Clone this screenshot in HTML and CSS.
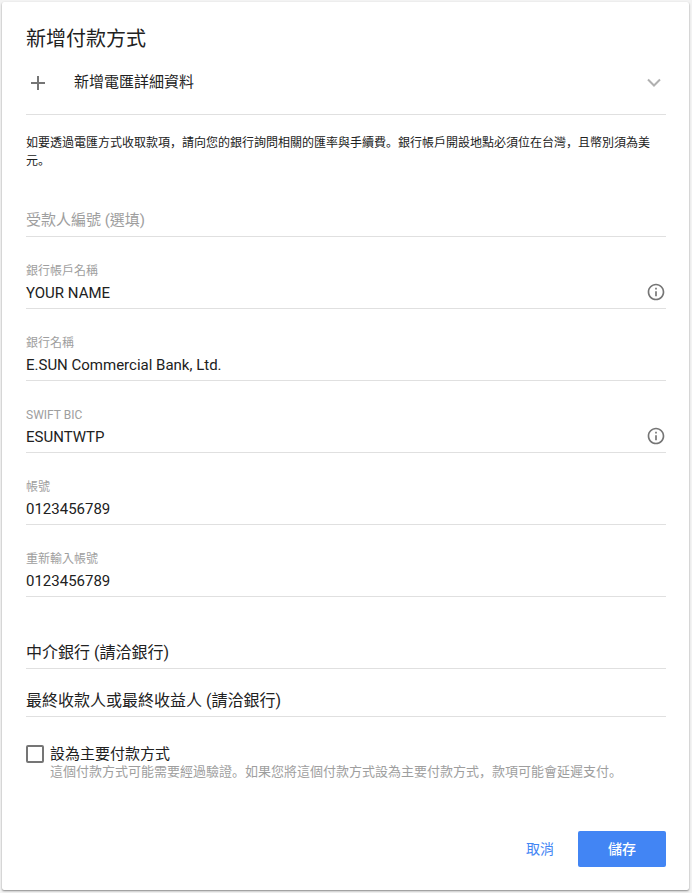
FILE: index.html
```html
<!DOCTYPE html>
<html lang="zh-Hant">
<head>
<meta charset="utf-8">
<title>新增付款方式</title>
<link rel="stylesheet" href="styles.css">
</head>
<body>
<main class="card">
  <h1 class="title">新增付款方式</h1>
  <div class="method">
    <svg class="plus" viewBox="0 0 14 14" width="14" height="14"><path d="M6 0h2v6h6v2H8v6H6V8H0V6h6z" fill="#757575"/></svg>
    <span class="method-label">新增電匯詳細資料</span>
    <svg class="chevron" viewBox="0 0 14 9" width="14" height="9"><path d="M1 1.5l6 6 6-6" fill="none" stroke="#b0b0b0" stroke-width="2"/></svg>
  </div>
  <p class="notice">如要透過電匯方式收取款項，請向您的銀行詢問相關的匯率與手續費。銀行帳戶開設地點必須位在台灣，且幣別須為美元。</p>
  <div class="field field-placeholder"><span class="placeholder">受款人編號 (選填)</span></div>
  <div class="field">
    <label class="label">銀行帳戶名稱</label>
    <div class="value-row"><span class="value">YOUR NAME</span>
      <svg class="info" viewBox="0 0 24 24" width="20" height="20"><path d="M11 7h2v2h-2zm0 4h2v6h-2zm1-9C6.48 2 2 6.48 2 12s4.48 10 10 10 10-4.48 10-10S17.52 2 12 2zm0 18c-4.41 0-8-3.59-8-8s3.59-8 8-8 8 3.59 8 8-3.59 8-8 8z" fill="#757575"/></svg>
    </div>
  </div>
  <div class="field">
    <label class="label">銀行名稱</label>
    <div class="value-row"><span class="value">E.SUN Commercial Bank, Ltd.</span></div>
  </div>
  <div class="field">
    <label class="label">SWIFT BIC</label>
    <div class="value-row"><span class="value">ESUNTWTP</span>
      <svg class="info" viewBox="0 0 24 24" width="20" height="20"><path d="M11 7h2v2h-2zm0 4h2v6h-2zm1-9C6.48 2 2 6.48 2 12s4.48 10 10 10 10-4.48 10-10S17.52 2 12 2zm0 18c-4.41 0-8-3.59-8-8s3.59-8 8-8 8 3.59 8 8-3.59 8-8 8z" fill="#757575"/></svg>
    </div>
  </div>
  <div class="field">
    <label class="label">帳號</label>
    <div class="value-row"><span class="value">0123456789</span></div>
  </div>
  <div class="field">
    <label class="label">重新輸入帳號</label>
    <div class="value-row"><span class="value">0123456789</span></div>
  </div>
  <div class="expander expander-first">中介銀行 (請洽銀行)</div>
  <div class="expander">最終收款人或最終收益人 (請洽銀行)</div>
  <div class="check-row">
    <span class="checkbox"></span>
    <div class="check-text">
      <div class="check-title">設為主要付款方式</div>
      <div class="check-help">這個付款方式可能需要經過驗證。如果您將這個付款方式設為主要付款方式，款項可能會延遲支付。</div>
    </div>
  </div>
  <div class="actions">
    <button class="btn-cancel" type="button">取消</button>
    <button class="btn-save" type="button">儲存</button>
  </div>
</main>
</body>
</html>
```
FILE: styles.css
```css
* { box-sizing: border-box; }
html, body { height: 100%; }
body {
  margin: 0;
  padding: 2px 3px 3px 2px;
  background: #f3f3f3;
  font-family: Roboto, "Noto Sans CJK TC", sans-serif;
  color: #212121;
}
.card {
  height: 888px;
  padding: 25px 23px 0 24px;
  background: #fff;
  border-radius: 2px;
  box-shadow: 0 1px 2px rgba(0,0,0,.45);
}
.title {
  margin: 0;
  height: 24px;
  font-size: 20px;
  line-height: 24px;
  font-weight: 400;
}
.method {
  display: flex;
  align-items: center;
  height: 64px;
  border-bottom: 1px solid #e0e0e0;
}
.plus { margin-left: 5px; }
.method-label { margin-left: 29px; font-size: 15px; line-height: 20px; flex: 1; padding-bottom: 2px; }
.chevron { margin-right: 5px; }
.notice {
  margin: 19px 0 0;
  font-family: Roboto, "Noto Sans CJK SC", sans-serif;
  font-feature-settings: "locl" 0;
  font-size: 12px;
  line-height: 18px;
  height: 36px;
}
.field {
  height: 72px;
  border-bottom: 1px solid #e0e0e0;
  display: flex;
  flex-direction: column;
  justify-content: flex-end;
}
.field-placeholder { height: 67px; padding-bottom: 5px; }
.placeholder { font-size: 15px; line-height: 22px; color: #9e9e9e; }
.label { font-size: 12px; line-height: 16px; color: #9e9e9e; }
.value-row {
  display: flex;
  justify-content: space-between;
  align-items: center;
  height: 22px;
  margin: 3px 0 4px;
}
.value { font-size: 15px; line-height: 22px; }
.info { margin-top: -2px; }
.expander {
  height: 48px;
  border-bottom: 1px solid #e0e0e0;
  font-size: 16px;
  line-height: 22px;
  padding-top: 21px;
}
.expander-first { height: 72px; padding-top: 45px; }
.check-row { display: flex; margin-top: 28px; }
.checkbox {
  width: 18px;
  height: 18px;
  border: 2px solid #757575;
  border-radius: 2px;
  margin-right: 6px;
}
.check-text { flex: 1; padding-top: 1px; }
.check-title { font-size: 15px; line-height: 16px; margin-bottom: 1px; }
.check-help {
  font-family: Roboto, "Noto Sans CJK SC", sans-serif;
  font-feature-settings: "locl" 0;
  font-size: 13px;
  line-height: 18px;
  color: #9e9e9e;
}
.actions {
  display: flex;
  justify-content: flex-end;
  align-items: center;
  margin-top: 50px;
}
.btn-cancel {
  border: 0;
  background: none;
  padding: 0 0 3px;
  margin-right: 24px;
  font: inherit;
  font-size: 14px;
  color: #4285f4;
}
.btn-save {
  width: 88px;
  height: 36px;
  border: 0;
  border-radius: 2px;
  background: #4285f4;
  color: #fff;
  padding: 0 0 3px;
  font: inherit;
  font-size: 14px;
  font-weight: 500;
}
```
